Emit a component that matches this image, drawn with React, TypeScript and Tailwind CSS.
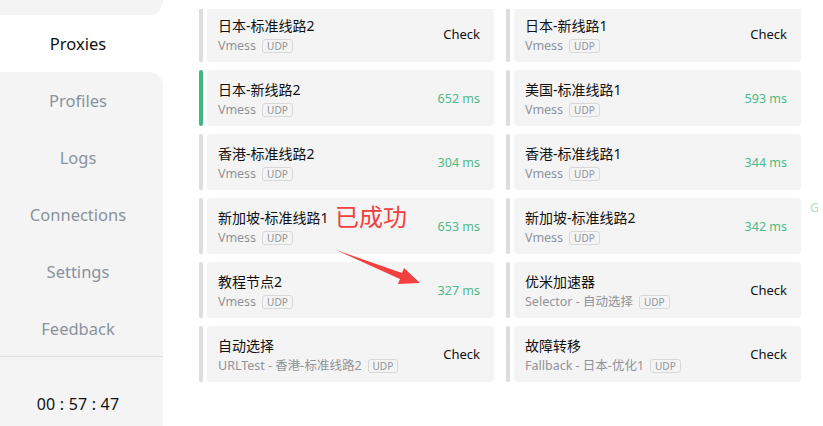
import React from "react";

type Proxy = {
  name: string;
  type: string;
  delay?: string;
  active?: boolean;
};

const leftCol: Proxy[] = [
  { name: "日本-标准线路2", type: "Vmess" },
  { name: "日本-新线路2", type: "Vmess", delay: "652 ms", active: true },
  { name: "香港-标准线路2", type: "Vmess", delay: "304 ms" },
  { name: "新加坡-标准线路1", type: "Vmess", delay: "653 ms" },
  { name: "教程节点2", type: "Vmess", delay: "327 ms" },
  { name: "自动选择", type: "URLTest - 香港-标准线路2" },
];

const rightCol: Proxy[] = [
  { name: "日本-新线路1", type: "Vmess" },
  { name: "美国-标准线路1", type: "Vmess", delay: "593 ms" },
  { name: "香港-标准线路1", type: "Vmess", delay: "344 ms" },
  { name: "新加坡-标准线路2", type: "Vmess", delay: "342 ms" },
  { name: "优米加速器", type: "Selector - 自动选择" },
  { name: "故障转移", type: "Fallback - 日本-优化1" },
];

const navItems = ["Profiles", "Logs", "Connections", "Settings", "Feedback"];

const ProxyCard = ({ item }: { item: Proxy }) => (
  <div className="flex h-[56px] gap-[4px]">
    <div
      className={
        item.active
          ? "w-[4px] rounded-sm bg-[#3fb883]"
          : "w-[4px] rounded-sm bg-[#dddddd]"
      }
    />
    <div className="flex flex-1 items-center justify-between rounded-[4px] bg-[#f4f4f4] pl-[11px] pr-[14px] pt-[2px]">
      <div className="flex flex-col">
        <span className="text-[14px] leading-[20px] text-[#111111]">
          {item.name}
        </span>
        <div className="mt-[2px] flex items-center gap-[6px]">
          <span className="text-[12.5px] leading-[16px] text-[#909399]">
            {item.type}
          </span>
          <span className="rounded-[3px] border border-[#d8d8d8] px-[4px] text-[10px] leading-[12px] text-[#909399]">
            UDP
          </span>
        </div>
      </div>
      {item.delay ? (
        <span className="text-[12.5px] text-[#4dba87]">{item.delay}</span>
      ) : (
        <span className="text-[13px] text-[#111111]">Check</span>
      )}
    </div>
  </div>
);

export default function App() {
  return (
    <div
      className="relative flex h-[426px] w-[823px] overflow-hidden bg-white"
      style={{ fontFamily: '"Noto Sans", "Noto Sans CJK SC", sans-serif' }}
    >
      {/* sidebar */}
      <div className="flex w-[163px] flex-col bg-white">
        <div className="h-[15px] rounded-br-[14px] bg-[#f4f4f4]" />
        <div className="flex h-[57px] items-center justify-center pr-[7px] pt-[2px] text-[16.5px] text-[#111111]">
          Proxies
        </div>
        <div className="flex flex-1 flex-col rounded-tr-[14px] bg-[#f4f4f4]">
          {navItems.map((nav) => (
            <div
              key={nav}
              className="flex h-[57px] items-center justify-center pr-[7px] pt-[2px] text-[16.5px] text-[#8a929e]"
            >
              {nav}
            </div>
          ))}
          <div className="mt-[-1px] h-px bg-[#dedede]" />
          <div className="flex flex-1 items-center justify-center pr-[7px] pt-[25px] text-[16px] tracking-[0.2px] text-[#111111]">
            00 : 57 : 47
          </div>
        </div>
      </div>

      {/* proxies */}
      <div className="flex-1 pl-[36px] pt-[9px]">
        <div className="h-full overflow-hidden">
          <div className="-mt-[3px] grid w-[602px] grid-cols-2 gap-x-[12px] gap-y-[8px]">
            {leftCol.map((item, idx) => (
              <React.Fragment key={idx}>
                <ProxyCard item={item} />
                <ProxyCard item={rightCol[idx]} />
              </React.Fragment>
            ))}
          </div>
        </div>
      </div>

      <span className="absolute left-[810px] top-[199px] text-[12px] text-[#a9e2c6]">
        G
      </span>

      {/* annotation */}
      <span className="absolute left-[335px] top-[201px] text-[24px] leading-[32px] text-[#f2403e]">
        已成功
      </span>
      <svg
        className="absolute left-0 top-0"
        width="823"
        height="426"
        viewBox="0 0 823 426"
      >
        <polygon
          points="336,250 402,273 404,268 420,283 398,284 400,279"
          fill="#f2403e"
        />
      </svg>
    </div>
  );
}
